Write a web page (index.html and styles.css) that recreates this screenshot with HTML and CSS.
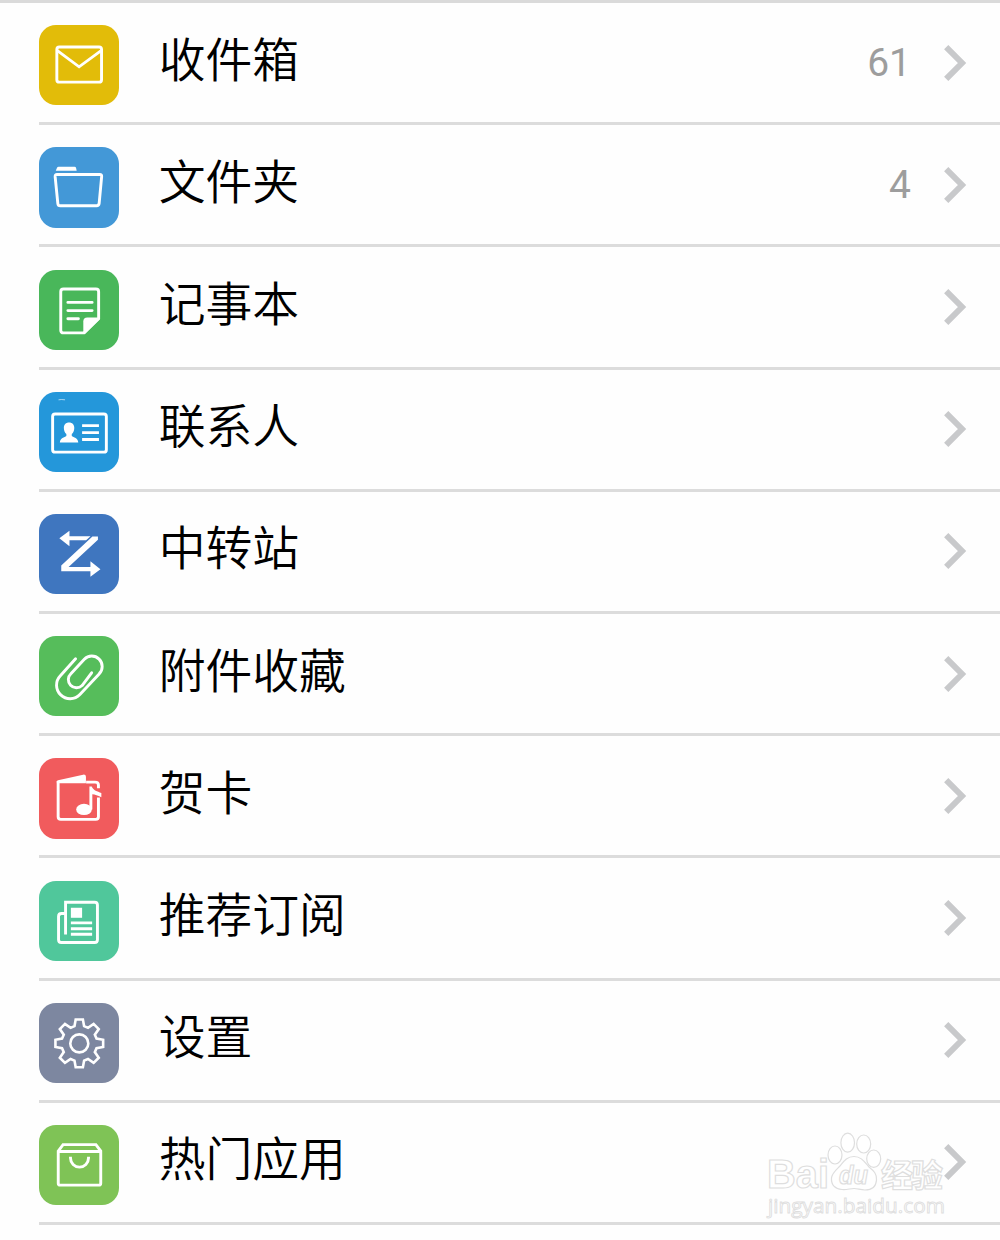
FILE: index.html
```html
<!DOCTYPE html>
<html lang="zh-CN">

<head>
    <meta charset="utf-8">
    <title>邮箱</title>
    <link rel="stylesheet" href="styles.css">
</head>

<body>
    <svg class="defs">
        <symbol id="arrow" viewBox="0 0 24 38">
            <path d="M3.2 3.2L19 19L3.2 34.8" fill="none" stroke="#c8c9cb" stroke-width="6" />
        </symbol>
    </svg>

    <div class="menu">
        <div class="menu-item">
            <div class="icon inbox">
                <svg viewBox="0 0 80 80">
                    <rect x="17.8" y="22" width="44.6" height="35" rx="2.5" />
                    <path d="M18.3 25.5L40 41.7L62 25.5" />
                </svg>
            </div>
            <span class="label">收件箱</span>
            <span class="count">61</span>
            <svg class="arrow"><use href="#arrow" /></svg>
        </div>

        <div class="menu-item">
            <div class="icon folder">
                <svg viewBox="0 0 80 80">
                    <path class="solid" d="M16.7 23.8L18 20.7Q18.4 19.8 19.5 19.8H35.5Q36.7 19.8 37 21L37.6 23.8Z" />
                    <path d="M18 27.4H60.6Q62.8 27.4 62.5 29.6L60 56.4Q59.7 58.6 57.5 58.6H21.3Q19 58.6 18.8 56.4L16.1 29.6Q16 27.4 18 27.4Z" />
                </svg>
            </div>
            <span class="label">文件夹</span>
            <span class="count">4</span>
            <svg class="arrow"><use href="#arrow" /></svg>
        </div>

        <div class="menu-item">
            <div class="icon note">
                <svg viewBox="0 0 80 80">
                    <path d="M45 62.7H24.5Q21.7 62.7 21.7 60V21.7Q21.7 19 24.5 19H56.7Q59.5 19 59.5 21.7V48.5L45 62.7Z" />
                    <path class="solid" d="M44.2 63.5V51.5Q44.2 47.5 48.2 47.5H60.8V49L46 63.5Z" />
                    <path class="round" d="M28.8 32.3H53M28.8 40.5H53M28.8 48.7H39.3" />
                </svg>
            </div>
            <span class="label">记事本</span>
            <svg class="arrow"><use href="#arrow" /></svg>
        </div>

        <div class="menu-item">
            <div class="icon contact">
                <svg viewBox="0 0 80 80">
                    <rect x="13.6" y="22" width="53.6" height="38" rx="2.5" />
                    <path class="solid" d="M30 30.4C33.2 30.4 35.2 32.6 35.2 35.8C35.2 38.3 34.2 40.5 32.7 41.8V43.8C34.5 45.4 39 45.5 39.2 50.3H20.8C21 45.5 25.5 45.4 27.3 43.8V41.8C25.8 40.5 24.8 38.3 24.8 35.8C24.8 32.6 26.8 30.4 30 30.4Z" />
                    <path d="M43 33.5H59.8M43 40.5H59.8M43 47.4H59.8" />
                    <path class="thin" d="M19.5 7.8Q22 7.2 26 7.8" />
                </svg>
            </div>
            <span class="label">联系人</span>
            <svg class="arrow"><use href="#arrow" /></svg>
        </div>

        <div class="menu-item">
            <div class="icon transfer">
                <svg viewBox="0 0 80 80">
                    <path class="solid" d="M20.3 24.3L30.4 16.8V22.3H51.4L47 26.3H30.4V32.2Z" />
                    <path class="solid" d="M53.3 22.4H58.8V25.8L29.5 52.8H51.3V47.2L61.3 55L51.3 62.7V57.2H22.2V51.3Z" />
                </svg>
            </div>
            <span class="label">中转站</span>
            <svg class="arrow"><use href="#arrow" /></svg>
        </div>

        <div class="menu-item">
            <div class="icon attach">
                <svg viewBox="0 0 80 80">
                    <path class="round" d="M36.5 22.7L21.3 39.6A13.3 13.3 0 0 0 40.8 58.4L60 37.8A10.4 10.4 0 0 0 45.2 23.1L31.8 37.6A8.1 8.1 0 0 0 43 49.4L52.5 36.7" />
                </svg>
            </div>
            <span class="label">附件收藏</span>
            <svg class="arrow"><use href="#arrow" /></svg>
        </div>

        <div class="menu-item">
            <div class="icon card">
                <svg viewBox="0 0 80 80">
                    <path d="M47 24.1H55.8Q59.3 24.1 59.3 27V30.2M59.3 39.5V58.6Q59.3 61.2 56.7 61.2H21.7Q19.1 61.2 19.1 58.6V23.5" />
                    <path class="solid" d="M17.8 23.3Q17.8 22.5 19 22.1L44 16.6Q46.8 16.3 46.8 18.5V25.2H17.8Z" />
                    <ellipse class="solid" cx="44.9" cy="51.3" rx="7.8" ry="5.6" />
                    <path class="solid" d="M50.3 28.5H52.6C54.5 32.8 58 33.2 62.2 35V39.2C58.5 37.5 56 36.4 53.2 36.2V51.5H50.3Z" />
                </svg>
            </div>
            <span class="label">贺卡</span>
            <svg class="arrow"><use href="#arrow" /></svg>
        </div>

        <div class="menu-item">
            <div class="icon news">
                <svg viewBox="0 0 80 80">
                    <path d="M26.5 53.3V21.2H55.5Q58.3 21.2 58.3 24V58.5Q58.3 61.3 55.5 61.3H22.3Q19.5 61.3 19.5 58.5V35.5Q19.5 32.5 22.5 32.5H26.5" />
                    <rect class="solid" x="31.8" y="26.7" width="11.2" height="10" />
                    <path d="M31.8 41.8H53M31.8 47.7H53M31.8 53.2H53" />
                </svg>
            </div>
            <span class="label">推荐订阅</span>
            <svg class="arrow"><use href="#arrow" /></svg>
        </div>

        <div class="menu-item">
            <div class="icon settings">
                <svg viewBox="0 0 80 80">
                    <g transform="translate(40.2 40.3)">
                        <path class="gear" d="M-3.6-23.8H3.6L4.8-17.2L8.7-15.5L14.3-19.4L19.4-14.3L15.5-8.7L17.2-4.8L23.8-3.6V3.6L17.2 4.8L15.5 8.7L19.4 14.3L14.3 19.4L8.7 15.5L4.8 17.2L3.6 23.8H-3.6L-4.8 17.2L-8.7 15.5L-14.3 19.4L-19.4 14.3L-15.5 8.7L-17.2 4.8L-23.8 3.6V-3.6L-17.2-4.8L-15.5-8.7L-19.4-14.3L-14.3-19.4L-8.7-15.5L-4.8-17.2Z" />
                        <circle class="gear" r="9" />
                    </g>
                </svg>
            </div>
            <span class="label">设置</span>
            <svg class="arrow"><use href="#arrow" /></svg>
        </div>

        <div class="menu-item">
            <div class="icon apps">
                <svg viewBox="0 0 80 80">
                    <path d="M19.2 26L24 19.6H56.8L61.6 26V58Q61.6 60 59.6 60H21.2Q19.2 60 19.2 58ZM19.2 26.4H61.6" />
                    <path d="M31.4 31.8V33A9 9 0 0 0 49.4 33V31.8" />
                </svg>
            </div>
            <span class="label">热门应用</span>
            <svg class="arrow"><use href="#arrow" /></svg>
            <svg class="watermark" viewBox="0 0 200 100">
                <text class="mark-bold" x="17" y="68" font-size="40" textLength="62" lengthAdjust="spacingAndGlyphs">Bai</text>
                <ellipse cx="85" cy="35" rx="7" ry="9" />
                <ellipse cx="97.7" cy="22.7" rx="6.8" ry="9.5" />
                <ellipse cx="113.7" cy="24" rx="7" ry="9" />
                <ellipse cx="123.7" cy="38.7" rx="7" ry="8.7" />
                <path d="M104 36.5C112 36.5 115 43 119 47C124 51 127 54 126.5 60C126 67 121 70 115 70C110 70 108 68.5 104 68.5C100 68.5 97 70 92 69.5C85 69 81 65 81.5 58C82 53 86 50 90 46C94 41 97 36.5 104 36.5Z" />
                <text class="mark-du" x="89" y="64" font-size="25" textLength="29" lengthAdjust="spacingAndGlyphs">du</text>
                <text class="mark-cn" x="131" y="66.5" font-size="32" textLength="62">经验</text>
                <text class="mark-url" x="18" y="93" font-size="20" textLength="177" lengthAdjust="spacingAndGlyphs">jingyan.baidu.com</text>
            </svg>
        </div>
    </div>
</body>

</html>
```
FILE: styles.css
```css
body {
    margin: 0;
    height: 1240px;
    background: #fefefe;
    font-family: Roboto, 'Noto Sans CJK SC', sans-serif;
    color: #000;
    overflow: hidden;
}

.defs {
    display: none;
}

.menu {
    border-top: 3px solid #dadada;
    padding-left: 39px;
}

.menu-item {
    position: relative;
    display: flex;
    align-items: center;
    box-sizing: border-box;
    height: 122.2px;
    padding-right: 33px;
    border-bottom: 3px solid #dcdcdc;
}

.icon {
    flex: none;
    width: 80.2px;
    height: 80.2px;
    margin-top: 5.4px;
    border-radius: 17px;
}

.icon svg {
    display: block;
    width: 100%;
    height: 100%;
    fill: none;
    stroke: #fff;
    stroke-width: 2.9;
}

.icon .solid {
    fill: #fff;
    stroke: none;
}

.icon .round {
    stroke-linecap: round;
    stroke-linejoin: round;
}

.icon .thin {
    stroke-width: 0.6;
}

.icon .gear {
    stroke-width: 2.6;
}

.inbox {
    background: #e2bc09;
}

.folder {
    background: #4398d7;
}

.note {
    background: #49b75a;
}

.contact {
    background: #2497da;
}

.transfer {
    background: #3f76bf;
}

.attach {
    background: #56bd5b;
}

.card {
    background: #f15b5d;
}

.news {
    background: #50c79b;
}

.settings {
    background: #7d87a0;
}

.apps {
    background: #7fc356;
}

.label {
    flex: 1;
    margin: -12px 0 0 39.5px;
    font-family: 'Noto Sans CJK SC', sans-serif;
    font-size: 46.8px;
    font-weight: 350;
    line-height: 60px;
}

.count {
    margin-right: 32px;
    font-size: 39px;
    line-height: 46px;
    color: #9d9d9d;
}

.arrow {
    flex: none;
    width: 24px;
    height: 38px;
}

.watermark {
    position: absolute;
    left: 711px;
    top: 17.2px;
    width: 200px;
    height: 100px;
    fill: #fff;
    stroke: #dedede;
    stroke-width: 1.2;
}

.mark-bold,
.mark-du {
    font-family: 'Liberation Sans', sans-serif;
    font-weight: bold;
}

.mark-du {
    font-style: italic;
}

.mark-cn {
    font-family: 'Noto Sans CJK SC', sans-serif;
    font-weight: bold;
}

.mark-url {
    font-family: 'Open Sans', sans-serif;
    stroke-width: 0.9;
}
```
